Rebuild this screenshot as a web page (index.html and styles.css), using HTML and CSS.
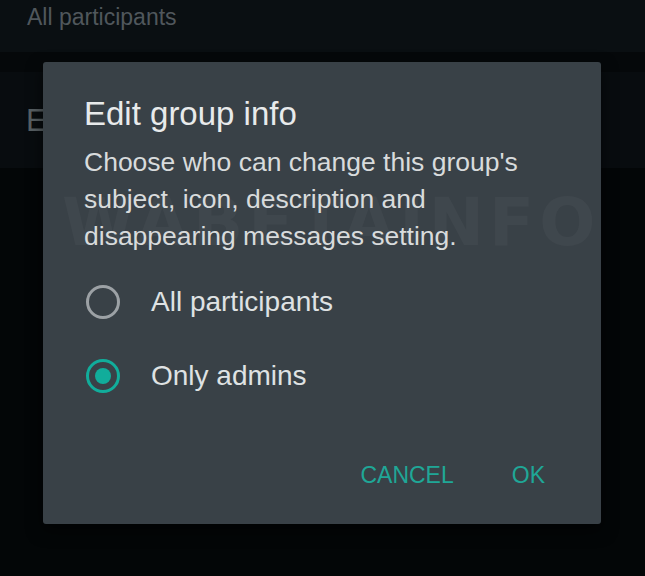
FILE: index.html
```html
<!DOCTYPE html>
<html>
<head>
<meta charset="utf-8">
<link rel="stylesheet" href="styles.css">
</head>
<body>
<div class="screen">
  <div class="row row-top">
    <div class="row-sub">All participants</div>
  </div>
  <div class="gap"></div>
  <div class="row row-second">
    <div class="row-title">Edit group info</div>
  </div>
  <div class="rest"></div>

  <div class="dialog">
    <div class="watermark" aria-hidden="true">WABETAINFO</div>
    <h1 class="title">Edit group info</h1>
    <p class="desc">Choose who can change this group's subject, icon, description and disappearing messages setting.</p>
    <div class="options">
      <div class="option">
        <span class="radio"></span>
        <span class="label">All participants</span>
      </div>
      <div class="option">
        <span class="radio checked"></span>
        <span class="label">Only admins</span>
      </div>
    </div>
    <div class="actions">
      <span class="btn">CANCEL</span>
      <span class="btn">OK</span>
    </div>
  </div>
</div>
</body>
</html>
```

FILE: styles.css
```css
* { box-sizing: border-box; }
html, body { margin: 0; padding: 0; }
body {
  background: #030607;
  font-family: "Liberation Sans", Arial, sans-serif;
  width: 645px;
  height: 576px;
  overflow: hidden;
}
.screen {
  position: relative;
  width: 645px;
  height: 576px;
  display: flex;
  flex-direction: column;
}
.row-top {
  height: 52px;
  background: #0a0f12;
  padding: 2px 0 0 27px;
}
.row-sub {
  color: #50575c;
  font-size: 23px;
  line-height: 30px;
}
.gap {
  height: 20px;
  background: #05080a;
}
.row-second {
  height: 96px;
  background: #080c0f;
  padding: 31px 0 0 26px;
}
.row-title {
  color: #586064;
  font-size: 31px;
  line-height: 36px;
}
.rest {
  flex: 1;
  background: #030607;
}
.dialog {
  position: absolute;
  left: 43px;
  top: 62px;
  width: 558px;
  height: 462px;
  background: #394147;
  border-radius: 3px;
  padding: 32px 41px 0 41px;
  overflow: hidden;
  box-shadow: 0 6px 16px rgba(0,0,0,0.6);
}
.watermark {
  position: absolute;
  left: 19px;
  top: 128px;
  font-family: "DejaVu Sans", sans-serif;
  font-weight: bold;
  font-size: 66px;
  line-height: 66px;
  letter-spacing: 5px;
  color: rgba(255,255,255,0.035);
  white-space: nowrap;
}
.title {
  position: relative;
  margin: 0;
  font-weight: 400;
  font-size: 33px;
  line-height: 40px;
  color: #e8eaeb;
}
.desc {
  position: relative;
  margin: 10px 0 0 0;
  font-size: 26.5px;
  line-height: 37px;
  color: #d8dbdc;
  width: 440px;
}
.options {
  position: relative;
  margin-top: 25px;
  display: flex;
  flex-direction: column;
  gap: 30px;
}
.option {
  display: flex;
  align-items: center;
  height: 44px;
}
.radio {
  width: 34px;
  height: 34px;
  border-radius: 50%;
  border: 3.5px solid #9ca1a5;
  margin-left: 2px;
  margin-right: 31px;
  display: flex;
  align-items: center;
  justify-content: center;
  flex: none;
}
.radio.checked {
  border-color: #11ad9b;
}
.radio.checked::after {
  content: "";
  width: 16px;
  height: 16px;
  border-radius: 50%;
  background: #11ad9b;
}
.label {
  font-size: 28px;
  color: #dfe2e3;
}
.actions {
  position: relative;
  margin-top: 62px;
  display: flex;
  justify-content: flex-end;
  gap: 58px;
  padding-right: 15px;
  line-height: 30px;
}
.btn {
  font-size: 23px;
  color: #1fa797;
}
```
